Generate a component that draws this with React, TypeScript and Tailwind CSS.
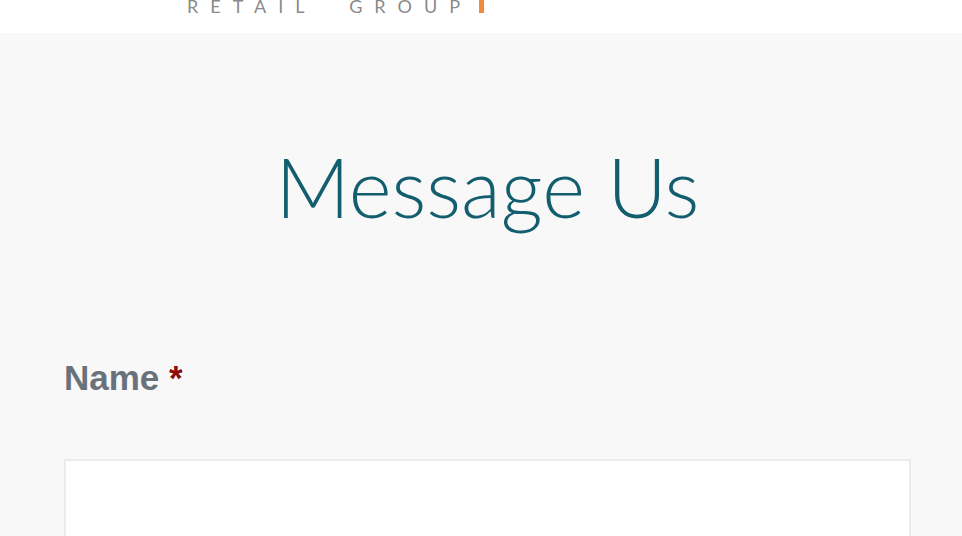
export default function App() {
  return (
    <div className="min-h-[536px] bg-[#f8f8f9] overflow-hidden">
      {/* logo strip, scrolled so only the bottom of the wordmark shows */}
      <header className="h-[33px] bg-white overflow-hidden">
        <div className="flex items-start pl-[187px] -mt-[3px]">
          <span className="font-['Lato',sans-serif] font-normal text-[18px] leading-none tracking-[12px] text-[#8a8a8a] whitespace-pre">
            RETAIL  GROUP
          </span>
          <span className="ml-[7px] mt-[3px] w-[5px] h-[13px] bg-[#f28a3c]" />
        </div>
      </header>

      <main className="pl-[64px] pr-[51px]">
        <h1 className="mt-[112px] text-center font-['Lato',sans-serif] font-light text-[82px] leading-none text-[#135e6e]">
          Message Us
        </h1>

        <label className="block mt-[133px] font-['Liberation_Sans',Arial,sans-serif] font-bold text-[35px] leading-none text-[#69727b]">
          Name <span className="text-[#8b0a0a]">*</span>
        </label>

        <input
          type="text"
          className="block mt-[64px] w-full h-[80px] bg-white border-2 border-[#ebebeb] outline-none"
        />
      </main>
    </div>
  )
}
